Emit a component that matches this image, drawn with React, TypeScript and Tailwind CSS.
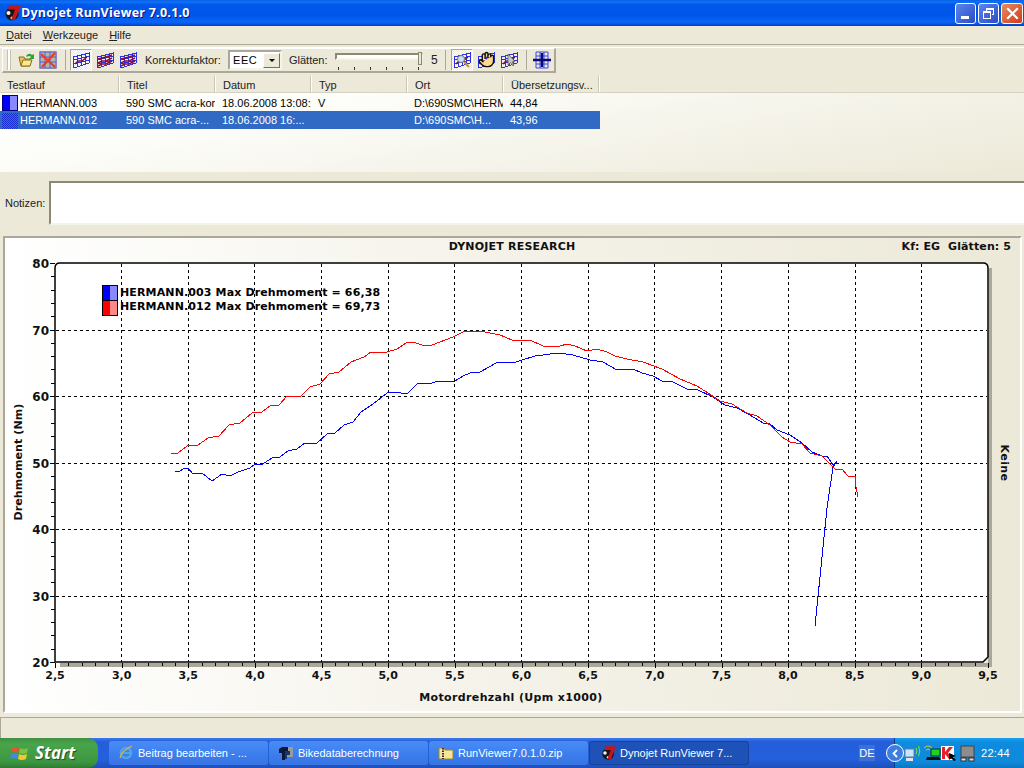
import React from 'react';
import { Hand } from 'lucide-react';

const ui = "font-['Liberation_Sans',sans-serif]";

const red = '171,454 178,453 187,446 198,445 208,438 219,436 229,425 240,423 252,413 262,412 270,406 279,405 287,396 301,396 310,387 320,384 329,374 339,372 351,362 364,357 371,352 387,352 397,349 406,343 413,342 422,345 432,345 440,342 453,337 463,332 480,331 500,335 512,340 530,340 543,346 560,346 567,344 575,346 587,351 597,349 607,352 615,356 627,359 643,362 662,369 680,379 697,386 708,393 720,401 732,404 747,413 757,416 770,425 782,437 790,442 802,444 810,453 822,456 835,469 842,469 848,476 855,476 856,487 858,497';
const blue = '175,471 180,471 185,468 188,468 193,474 202,473 212,481 222,474 230,476 238,472 250,468 255,464 261,465 272,458 280,457 288,451 297,449 305,443 317,443 327,434 335,433 344,425 353,422 361,412 373,404 387,393 395,392 407,394 418,383 432,383 438,381 453,382 465,375 473,372 480,372 498,362 513,363 522,360 535,356 558,353 573,355 590,360 603,362 617,370 633,369 642,373 653,376 662,381 673,382 687,389 698,390 713,397 725,405 737,408 750,415 763,423 770,424 777,430 790,435 802,443 812,452 822,456 827,456 833,465 837,461 836,463 833,467 827,508 815,626';

const gridX = [121, 188, 254, 321, 388, 454, 521, 588, 654, 721, 788, 855, 921];
const gridY = [330, 396, 463, 529, 596];
const xLabels = ['2,5', '3,0', '3,5', '4,0', '4,5', '5,0', '5,5', '6,0', '6,5', '7,0', '7,5', '8,0', '8,5', '9,0', '9,5'];
const yLabels = ['80', '70', '60', '50', '40', '30', '20'];

const columns = [
  { name: 'Testlauf', w: 'w-[120px]' },
  { name: 'Titel', w: 'w-[96px]' },
  { name: 'Datum', w: 'w-[96px]' },
  { name: 'Typ', w: 'w-[96px]' },
  { name: 'Ort', w: 'w-[96px]' },
  { name: 'Übersetzungsv...', w: 'w-[96px]' },
];

const DynoLogo = ({ size = 18 }: { size?: number }) => (
  <svg width={size} height={size} viewBox="0 0 18 18" className="shrink-0">
    <circle cx="8" cy="10" r="6.5" fill="#151515" />
    <circle cx="4.5" cy="9" r="2" fill="#f1f1f1" />
    <circle cx="8" cy="14" r="1.6" fill="#d8d8d8" />
    <path d="M5 1.5 H17 L11 16 H7 L11 5.5 H4 Z" fill="#c8141c" />
  </svg>
);

const Grid = ({ curves = 1, children }: { curves?: number; children?: React.ReactNode }) => (
  <svg width="18" height="18" viewBox="0 0 18 18" className="shrink-0">
    <g stroke="#2a32e6" strokeWidth="1" fill="none" shapeRendering="crispEdges">
      <path d="M1 6 L17 2 V12 L2 17 Z" fill="#ffffff" fillOpacity="0.25" />
      <path d="M5 5 V15 M9 4 V15 M13 3 V14 M1 9 L17 5 M1 13 L17 9" />
    </g>
    <g stroke="#8b0a3c" strokeWidth="1.400" fill="none">
      {curves === 1 && <path d="M3 13 L6 10 L10 10 L15 6" />}
      {curves > 1 && <path d="M2 8 L6 7 L10 6 L16 4" />}
      {curves > 1 && <path d="M2 12 L6 10 L10 10 L16 7" />}
      {curves > 1 && <path d="M2 15 L6 13 L10 13 L16 10" />}
    </g>
    {children}
  </svg>
);

const Sep = () => <div className="w-[2px] h-[20px] border-l border-[#aca899] border-r-white" />;

const ActiveBox = ({ children }: { children: React.ReactNode }) => (
  <div className="w-[22px] h-[22px] flex items-center justify-center bg-[repeating-conic-gradient(#ffffff_0_25%,#ece9d8_0_50%)] bg-[length:2px_2px] border border-t-[#aca899] border-l-[#aca899] border-r-white border-b-white">
    {children}
  </div>
);

const Chart = () => (
  <svg width="1015" height="473" viewBox="5 238 1015 473" className="block">
    <g className="font-['DejaVu_Sans'] font-bold text-[11px]" fill="#111">
      <text x="512" y="250" textAnchor="middle" className="tracking-[0.2px]">DYNOJET RESEARCH</text>
      <text x="1011" y="250" textAnchor="end" className="whitespace-pre tracking-[0.1px]">Kf: EG  Glätten: 5</text>
    </g>

    <path d="M989 268 H992 V667 H60 V663 H988 Z" fill="#aca899" />
    <path d="M55 268 Q55 263 60 263 H983 Q988 263 988 268 V657 L983 662 H55 Z" fill="#ffffff" />

    <g stroke="#000" strokeDasharray="3 3" shapeRendering="crispEdges">
      {gridX.map((x) => <line key={x} x1={x + 0.5} x2={x + 0.5} y1="264" y2="662" />)}
      {gridY.map((y) => <line key={y} x1="56" x2="987" y1={y + 0.5} y2={y + 0.5} />)}
    </g>

    <polyline points={blue} fill="none" stroke="#0000ff" strokeWidth="1" shapeRendering="crispEdges" />
    <polyline points={red} fill="none" stroke="#ff0000" strokeWidth="1" shapeRendering="crispEdges" />

    <path d="M55 268 Q55 263 60 263 H983 Q988 263 988 268 V657 L983 662 H55 Z" fill="none" stroke="#000" strokeWidth="1.500" />

    <g stroke="#000" shapeRendering="crispEdges">
      {Array.from({ length: 71 }, (_, i) => (
        <line key={i} x1={55 + Math.round(i * 13.33)} x2={55 + Math.round(i * 13.33)} y1="663" y2={i % 5 === 0 ? 668 : 666} />
      ))}
      {Array.from({ length: 31 }, (_, i) => (
        <line key={i} y1={263 + Math.round(i * 13.3)} y2={263 + Math.round(i * 13.3)} x1={i % 5 === 0 ? 50 : 51} x2="55" />
      ))}
    </g>

    <g className="font-['DejaVu_Sans'] font-bold text-[11px]" fill="#111">
      {xLabels.map((t, i) => (
        <text key={t} x={55 + i * 66.64} y="679" textAnchor="middle">{t}</text>
      ))}
      {yLabels.map((t, i) => (
        <text key={t} x="49" y={268 + i * 66.5} textAnchor="end" className="text-[12px]">{t}</text>
      ))}
      <text x="511" y="701" textAnchor="middle" className="tracking-[0.36px]">Motordrehzahl (Upm x1000)</text>
      <text transform="translate(22 462) rotate(-90)" textAnchor="middle" className="tracking-[0.1px]">Drehmoment (Nm)</text>
      <text transform="translate(1001 463) rotate(90)" textAnchor="middle" className="tracking-[0.4px]">Keine</text>
    </g>

    <g shapeRendering="crispEdges">
      <rect x="102" y="285" width="16" height="31" fill="#000" />
      <rect x="103" y="286" width="7" height="14" fill="#0000ff" />
      <rect x="110" y="286" width="7" height="14" fill="#8888ff" />
      <rect x="103" y="301" width="7" height="14" fill="#ff0000" />
      <rect x="110" y="301" width="7" height="14" fill="#ff8888" />
    </g>
    <g className="font-['DejaVu_Sans'] font-bold text-[11px] tracking-[0.13px]" fill="#000" stroke="none">
      <text x="120" y="296">HERMANN.003 Max Drehmoment = 66,38</text>
      <text x="120" y="310">HERMANN.012 Max Drehmoment = 69,73</text>
    </g>
  </svg>
);

const TaskButton = ({ icon, label, active }: { icon: React.ReactNode; label: string; active?: boolean }) => (
  <div
    className={
      active
        ? 'w-[160px] h-[24px] flex items-center gap-[3px] pl-[11px] rounded-[3px] bg-[#1e52b7] border border-[#17419a] text-white text-[11px]'
        : 'w-[159px] h-[24px] flex items-center gap-[4px] pl-[9px] rounded-[3px] bg-[linear-gradient(#4a8cf6,#3c7fee_50%,#3874e4)] text-white text-[11px]'
    }
  >
    {icon}
    <span className="whitespace-nowrap">{label}</span>
  </div>
);

export default function App() {
  return (
    <div className={`w-[1024px] h-[768px] overflow-hidden flex flex-col bg-[#ece9d8] text-[11px] text-[#222] ${ui}`}>
      {/* title bar */}
      <div className="h-[26px] shrink-0 flex items-center pl-[4px] pr-[1px] bg-[linear-gradient(#0a5fe8,#0a74f8_8%,#0058e8_18%,#0055ea_60%,#0a66f6_85%,#0040c8)]">
        <DynoLogo />
        <span className="ml-[-1px] text-white font-bold text-[12.500px] tracking-[0.25px] font-['Open_Sans',sans-serif] [text-shadow:1px_1px_#0f1089]">
          Dynojet RunViewer 7.0.1.0
        </span>
        <div className="ml-auto flex gap-[2px]">
          <div className="w-[21px] h-[21px] rounded-[3px] border border-white bg-[linear-gradient(135deg,#5c86ee,#2a4cc6)] flex items-end pl-[5px] pb-[4px]">
            <div className="w-[8px] h-[3px] bg-white" />
          </div>
          <div className="w-[21px] h-[21px] rounded-[3px] border border-white bg-[linear-gradient(135deg,#5c86ee,#2a4cc6)] flex items-center justify-center">
            <svg width="13" height="13" viewBox="0 0 13 13" fill="none" stroke="#fff" shapeRendering="crispEdges">
              <path d="M4.500 3.500 V1.500 H11.500 V7.500 H9.500" strokeWidth="1" />
              <rect x="1.500" y="4.500" width="7" height="7" strokeWidth="1" />
              <path d="M1 5 H9 M4 2 H12" strokeWidth="2" />
            </svg>
          </div>
          <div className="w-[22px] h-[21px] rounded-[3px] border border-white bg-[linear-gradient(135deg,#e88a64,#cf3d15)] flex items-center justify-center">
            <svg width="13" height="13" viewBox="0 0 13 13" stroke="#fff" strokeWidth="2.200" strokeLinecap="square">
              <path d="M2 2 L11 11 M11 2 L2 11" />
            </svg>
          </div>
        </div>
      </div>

      {/* menu */}
      <div className="h-[18px] shrink-0 flex items-center pl-[6px] gap-[11px]">
        <span><u>D</u>atei</span>
        <span><u>W</u>erkzeuge</span>
        <span><u>H</u>ilfe</span>
      </div>
      <div className="h-[4px] shrink-0 border-t border-[#aca899] border-b border-b-white" />

      {/* toolbar */}
      <div className="ml-[2px] w-[554px] h-[25px] shrink-0 flex items-center bg-[#ece9d8] border-t border-l border-t-white border-l-white border-r-2 border-b-2 border-r-[#aca899] border-b-[#aca899]">
        <div className="ml-[4px] w-[4px] h-[20px] border-x border-[#c4c1ae] bg-white" />
        <svg width="18" height="18" viewBox="0 0 18 18" className="ml-[6px]">
          <path d="M2 6 H7 L8 8 H13 V15 H4 Z" fill="#e8c553" stroke="#8a6d1d" />
          <path d="M4 15 L6 9 H15 L13 15 Z" fill="#fbe88f" stroke="#8a6d1d" />
          <path d="M9 5 Q12 1 15 4 L17 3 V8 H12 L14 6 Q12 4 10 6 Z" fill="#2fa33a" />
        </svg>
        <div className="ml-[4px]">
          <svg width="18" height="18" viewBox="0 0 18 18" className="bg-[#b5b3ad]">
            <path d="M1 1 H17 V17 H1 Z M6 1 V17 M11 1 V17 M1 6 H17 M1 11 H17" stroke="#4a63e0" fill="none" />
            <path d="M2 3 L16 16 M16 2 L3 16" stroke="#ee3a1d" strokeWidth="2.200" />
          </svg>
        </div>
        <div className="ml-[8px]"><Sep /></div>
        <div className="ml-[3px]"><ActiveBox><Grid /></ActiveBox></div>
        <div className="ml-[4px]"><Grid curves={3} /></div>
        <div className="ml-[5px]"><Grid curves={3} /></div>
        <span className="ml-[8px] w-[83px]">Korrekturfaktor:</span>
        <div className="w-[54px] h-[20px] bg-white border-2 border-t-[#aca899] border-l-[#aca899] border-r-[#f5f4ea] border-b-[#f5f4ea] flex items-center justify-between pl-[3px] pr-0 text-black">
          <span className="tracking-[0.6px]">EEC</span>
          <div className="w-[17px] h-[15px] bg-[#ece9d8] border border-t-white border-l-white border-r-[#716f64] border-b-[#716f64] flex items-center justify-center">
            <div className="w-0 h-0 border-x-[3px] border-x-transparent border-t-[3px] border-t-black" />
          </div>
        </div>
        <span className="ml-[7px] w-[46px]">Glätten:</span>
        <div className="w-[88px] h-[22px] flex flex-col justify-start">
          <div className="relative h-[7px] mt-[4px] bg-white border-2 border-t-[#8b8975] border-l-[#8b8975] border-r-[#f5f4ea] border-b-[#f5f4ea]">
            <div className="absolute right-[-1px] top-[-3px] w-[4px] h-[13px] bg-[#ece9d8] border border-[#8b8975]" />
          </div>
          <div className="mt-[7px] pl-[3px] pr-[4px] flex justify-between">
            {[0, 1, 2, 3, 4, 5].map((t) => <div key={t} className="w-[1px] h-[3px] bg-[#333]" />)}
          </div>
        </div>
        <span className="ml-[8px] w-[12px] text-[12px]">5</span>
        <div className="ml-[2px]"><Sep /></div>
        <div className="ml-[4px]">
          <ActiveBox>
            <Grid>
              <circle cx="8" cy="8" r="3.500" fill="#c9e0f4" stroke="#6a7a90" />
              <path d="M11 11 L16 16" stroke="#c79322" strokeWidth="2" />
            </Grid>
          </ActiveBox>
        </div>
        <div className="ml-[4px] relative">
          <Grid />
          <Hand className="absolute left-[1px] top-0" size={17} fill="#ffd98a" color="#111" strokeWidth={2} />
        </div>
        <div className="ml-[5px]">
          <Grid>
            <path d="M8 3 L8 14 L10.500 11.500 L13 15 L14 14 L12 11 L15 10.500 Z" fill="#c8c8c8" stroke="#555" strokeWidth="0.700" />
          </Grid>
        </div>
        <div className="ml-[8px]"><Sep /></div>
        <svg width="19" height="18" viewBox="0 0 19 18" className="ml-[5px]">
          <path d="M3 1 H15 V17 H3 Z M7 1 V17 M11 1 V17 M3 5 H15 M3 13 H15" stroke="#3a45ea" fill="none" />
          <path d="M0 9 H18 M9 2 V16" stroke="#0a0a7a" strokeWidth="2.500" />
        </svg>
      </div>

      {/* run list */}
      <div className="h-[96px] mt-[3px] shrink-0 flex flex-col bg-[linear-gradient(170deg,#ffffff,#fdfdfa_30%,#ece9d8)]">
        <div className="h-[17px] shrink-0 flex bg-[#ece9d8] border-b border-[#d6d2c2]">
          {columns.map((c, i) => (
            <div
              key={c.name}
              className={`${c.w} ${i === 0 ? 'pl-[7px]' : 'pl-[7px]'} shrink-0 pt-[1px] shadow-[inset_-1px_0_#ffffff,inset_-2px_0_#cbc7b8] leading-[17px] whitespace-nowrap overflow-hidden`}
            >
              {c.name}
            </div>
          ))}
        </div>
        <div className="w-[600px] h-[18px] flex items-center pt-[2px] text-black">
          <div className="w-[119px] shrink-0 flex items-center pl-[2px]">
            <div className="w-[16px] h-[16px] flex border border-[#000080]">
              <div className="w-1/2 bg-[#0000ff]" />
              <div className="w-1/2 bg-[#8888ff]" />
            </div>
            <span className="ml-[2px]">HERMANN.003</span>
          </div>
          <span className="w-[96px] shrink-0 pl-[7px] overflow-hidden whitespace-nowrap">590 SMC acra-kom</span>
          <span className="w-[96px] shrink-0 pl-[7px] overflow-hidden whitespace-nowrap">18.06.2008 13:08:0</span>
          <span className="w-[96px] shrink-0 pl-[7px]">V</span>
          <span className="w-[96px] shrink-0 pl-[7px] overflow-hidden whitespace-nowrap">D:\690SMC\HERM</span>
          <span className="pl-[7px]">44,84</span>
        </div>
        <div className="w-[600px] h-[18px] flex items-center pt-[1px] bg-[#316ac5] text-white">
          <div className="w-[119px] shrink-0 flex items-center pl-[2px]">
            <div className="w-[16px] h-[16px] bg-[repeating-conic-gradient(#1c2fd0_0_25%,#c0404a_0_50%)] bg-[length:2px_2px]" />
            <span className="ml-[2px]">HERMANN.012</span>
          </div>
          <span className="w-[96px] shrink-0 pl-[7px]">590 SMC acra-...</span>
          <span className="w-[96px] shrink-0 pl-[7px]">18.06.2008 16:...</span>
          <span className="w-[96px] shrink-0" />
          <span className="w-[96px] shrink-0 pl-[7px]">D:\690SMC\H...</span>
          <span className="pl-[7px]">43,96</span>
        </div>
      </div>

      {/* notes */}
      <div className="h-[54px] shrink-0 flex items-end pb-[1px]">
        <span className="w-[49px] pl-[5px] pb-[14px]">Notizen:</span>
        <div className="flex-1 h-[44px] bg-white border-2 border-t-[#8b8975] border-l-[#8b8975] border-r-0 border-b-[#f5f4ea]" />
      </div>

      {/* chart */}
      <div className="mt-[10px] mx-[3px] w-[1019px] h-[477px] shrink-0 border-2 border-t-[#aca899] border-l-[#aca899] border-r-white border-b-white bg-[linear-gradient(to_right,#ffffff,#f5f3ea_45%,#ece9d8)]">
        <Chart />
      </div>

      {/* status bar */}
      <div className="mt-[4px] h-[21px] shrink-0 border-t border-l border-[#aca899] border-b-white" />

      {/* taskbar */}
      <div className="h-[30px] shrink-0 flex items-center bg-[linear-gradient(#3a7bea,#245edb_12%,#2560dc_70%,#1d4fb8)] text-white">
        <div className="w-[98px] h-[30px] shrink-0 flex items-center gap-[5px] pl-[10px] rounded-r-[10px] bg-[linear-gradient(#3f8f43,#48a54b_20%,#3d963f_80%,#2f7a34)]">
          <svg width="20" height="20" viewBox="0 0 20 20">
            <path d="M2 5 Q5 3 9 5 L8 10 Q5 8 1 10 Z" fill="#e8552a" />
            <path d="M10 5 Q14 7 18 5 L17 10 Q13 12 9 10 Z" fill="#7cc142" />
            <path d="M1 11 Q4 9 8 11 L7 16 Q4 14 0 16 Z" fill="#3f8ae8" />
            <path d="M9 11 Q13 13 17 11 L16 16 Q12 18 8 16 Z" fill="#f4c72e" />
          </svg>
          <span className="text-[17px] font-bold italic text-white font-['Open_Sans',sans-serif] [text-shadow:1px_1px_1px_#1c4d1f]">Start</span>
        </div>
        <div className="ml-[11px] flex items-center gap-[1px]">
          <TaskButton
            label="Beitrag bearbeiten - ..."
            icon={
              <svg width="16" height="16" viewBox="0 0 16 16" fill="none">
                <circle cx="8" cy="8" r="5" stroke="#4ea6e8" strokeWidth="2.500" />
                <path d="M4 8 H13" stroke="#4ea6e8" strokeWidth="2" />
                <path d="M2 13 Q3 6 14 1" stroke="#e8b23a" strokeWidth="1.300" />
              </svg>
            }
          />
          <TaskButton
            label="Bikedataberechnung"
            icon={
              <svg width="16" height="16" viewBox="0 0 16 16">
                <rect x="6" y="2" width="9" height="10" fill="#9a9a9a" />
                <path d="M1 4 L4 2 H10 V9 H7 V15 H4 V8 H1 Z" fill="#0b1a3c" />
                <path d="M7 6 H12 V10 H9 V14 H7 Z" fill="#16356e" />
              </svg>
            }
          />
          <TaskButton
            label="RunViewer7.0.1.0.zip"
            icon={
              <svg width="16" height="16" viewBox="0 0 16 16">
                <path d="M1 3 H6 L7 5 H15 V14 H1 Z" fill="#f6e59a" stroke="#9a8534" />
                <path d="M5 3 V14" stroke="#333" strokeWidth="2" strokeDasharray="1.500 1" />
              </svg>
            }
          />
          <TaskButton active label="Dynojet RunViewer 7..." icon={<DynoLogo size={16} />} />
        </div>
        <div className="ml-[110px] w-[16px] h-[16px] flex items-center justify-center bg-[#3c70d8]">DE</div>
        <div className="ml-[19px] h-[30px] flex-1 flex items-center bg-[linear-gradient(#18a0ee,#0d8bdf_15%,#0f8ad8_80%,#0c74c4)] border-l border-[#0a3d8c]">
          <div className="ml-[-9px] w-[18px] h-[18px] shrink-0 rounded-full bg-[#3b7de0] border border-white flex items-center justify-center">
            <svg width="9" height="9" viewBox="0 0 9 9" fill="none" stroke="#fff" strokeWidth="1.800"><path d="M6 1 L2.500 4.500 L6 8" /></svg>
          </div>
          <svg width="18" height="18" viewBox="0 0 18 18" className="shrink-0">
            <rect x="1" y="5" width="9" height="8" fill="#cfe2f7" stroke="#5a7fb0" />
            <rect x="2" y="14" width="7" height="3" fill="#dfe8f2" />
            <path d="M12 4 Q14 7 12 10 M14.500 2 Q17 7 14.500 12" stroke="#7fe04a" fill="none" />
          </svg>
          <svg width="19" height="18" viewBox="0 0 19 18" className="ml-[1px] shrink-0">
            <path d="M1 4 Q5 0 9 4 M3 6 Q5 4 7 6" stroke="#d8c531" fill="none" />
            <rect x="8" y="5" width="9" height="7" fill="#22d022" stroke="#0a3a0a" />
            <path d="M4 13 H16 L18 16 H3 Z" fill="#111" />
          </svg>
          <svg width="16" height="16" viewBox="0 0 16 16" className="ml-[-1px] shrink-0">
            <rect x="0" y="1" width="13" height="14" fill="#fff" />
            <path d="M1 2 H4 V7 L8 2 H12 L7 8 L12 14 H8 L4 9 V14 H1 Z" fill="#e4202c" />
            <path d="M8 8 L15 11 L12 12 L15 15 L13 16 L10 13 L8 15 Z" fill="#000" />
          </svg>
          <svg width="16" height="17" viewBox="0 0 16 17" className="ml-[3px] shrink-0">
            <rect x="1" y="1" width="13" height="11" fill="#8d8d8d" stroke="#444" />
            <rect x="1" y="13" width="5" height="3" fill="#ddd" stroke="#333" />
            <rect x="9" y="13" width="5" height="3" fill="#ddd" stroke="#333" />
          </svg>
          <span className="ml-[5px] tracking-[0.3px]">22:44</span>
        </div>
      </div>
    </div>
  );
}
